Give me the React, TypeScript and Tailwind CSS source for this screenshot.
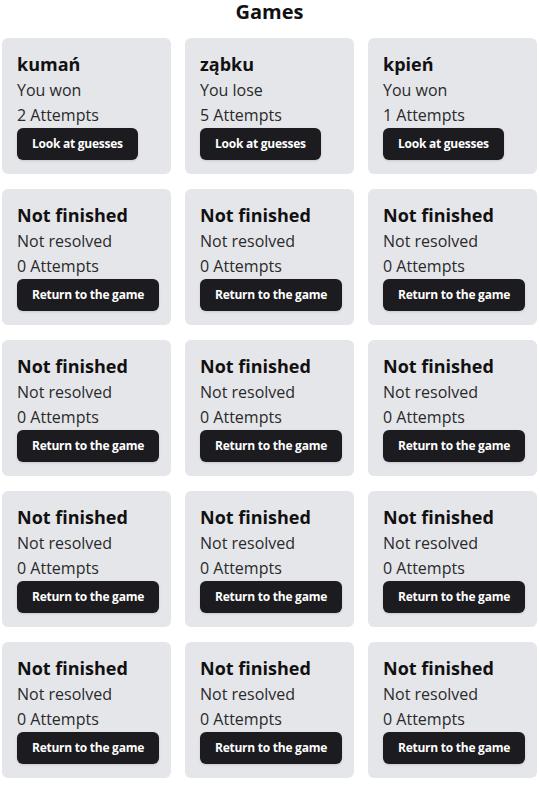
const games = [
  { word: "kumań", status: "You won", attempts: 2, done: true },
  { word: "ząbku", status: "You lose", attempts: 5, done: true },
  { word: "kpień", status: "You won", attempts: 1, done: true },
  ...Array.from({ length: 12 }, () => ({
    word: "Not finished",
    status: "Not resolved",
    attempts: 0,
    done: false,
  })),
];

function GameCard({ game }: { game: (typeof games)[number] }) {
  return (
    <div className="bg-[#e5e6ea] rounded-md px-[15px] pt-[14px] pb-[14px] flex flex-col items-start">
      <h3 className="text-[18px] font-bold leading-[24px] text-[#111]">
        {game.word}
      </h3>
      <p className="text-[16px] leading-[26px] mt-[1px] text-[#2a2a2a]">{game.status}</p>
      <p className="text-[16px] leading-[25px] text-[#2a2a2a]">
        {game.attempts} Attempts
      </p>
      <button className="h-8 px-[15px] rounded-md bg-[#1c1b1f] text-white text-[12px] font-bold tracking-[-0.25px] whitespace-nowrap shadow-sm">
        {game.done ? "Look at guesses" : "Return to the game"}
      </button>
    </div>
  );
}

export default function App() {
  return (
    <div className="min-h-screen bg-white px-[2px] font-['Open_Sans',sans-serif]">
      <h1 className="text-center text-[20px] font-bold leading-6 mb-[14px] text-[#111]">
        Games
      </h1>
      <div className="grid grid-cols-3 gap-x-[14px] gap-y-[15px]">
        {games.map((g, i) => (
          <GameCard key={i} game={g} />
        ))}
      </div>
    </div>
  );
}
